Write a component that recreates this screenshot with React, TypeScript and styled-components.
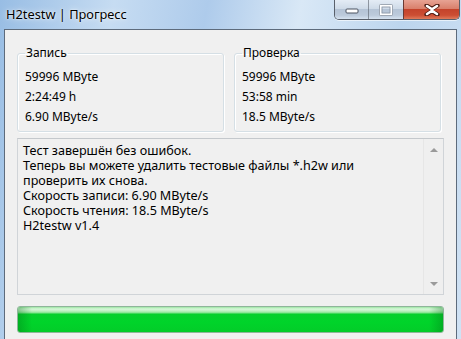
import React from "react";
import styled, { createGlobalStyle } from "styled-components";

const GlobalStyle = createGlobalStyle`
  html, body {
    margin: 0;
    padding: 0;
  }
  body {
    font-family: "Noto Sans", "Open Sans", sans-serif;
    font-size: 12px;
    color: #000;
  }
`;

const Frame = styled.div`
  width: 461px;
  height: 339px;
  overflow: hidden;
  display: flex;
  flex-flow: column nowrap;
  background: linear-gradient(
    100deg,
    #98bde4 0%,
    #c6dcf2 22%,
    #aecbeb 40%,
    #d9e8f6 58%,
    #bcd5ee 78%,
    #d0e2f4 100%
  );
  padding: 0 4px 0 4px;
  box-sizing: border-box;
`;

const TitleBar = styled.header`
  height: 29px;
  display: flex;
  flex-flow: row nowrap;
  align-items: flex-start;
  flex-shrink: 0;
`;

const Title = styled.h1`
  flex-grow: 1;
  margin: 0;
  padding: 6px 0 0 2px;
  font-size: 12.8px;
  font-weight: normal;
  line-height: 16px;
  color: #000;
  text-shadow: 0 0 6px rgba(255, 255, 255, 0.9), 0 0 2px #fff;
`;

const Caption = styled.div`
  display: flex;
  flex-flow: row nowrap;
  height: 19px;
  margin-right: -3px;
  border: 1px solid #59606b;
  border-top: none;
  border-radius: 0 0 5px 5px;
  overflow: hidden;
  box-shadow: 0 1px 0 rgba(255, 255, 255, 0.6);
`;

const CapButton = styled.div<{ $close?: boolean; $w: number }>`
  width: ${(p) => p.$w}px;
  display: flex;
  align-items: center;
  justify-content: center;
  border-left: ${(p) => (p.$close ? "1px solid #6b3a33" : "none")};
  border-right: ${(p) => (p.$close ? "none" : "1px solid rgba(90,96,107,0.6)")};
  background: ${(p) =>
    p.$close
      ? "linear-gradient(to bottom, #e7a394 0%, #d9806c 45%, #c4432b 50%, #cc4e33 80%, #e07a5a 100%)"
      : "linear-gradient(to bottom, #e4ecf5 0%, #cfdbe8 45%, #b5c4d6 50%, #bccadb 80%, #d6e3f0 100%)"};
  &:nth-child(2) {
    border-right: none;
  }
`;

const Client = styled.main`
  flex-grow: 1;
  background: #f0f0f0;
  border: 1px solid #5d6b7c;
  border-bottom: none;
  padding: 15px 12px 8px 12px;
  display: flex;
  flex-flow: column nowrap;
`;

const Groups = styled.div`
  display: grid;
  grid-template-columns: 207px 207px;
  column-gap: 10px;
`;

const Group = styled.fieldset`
  margin: 0;
  padding: 6px 7px 4px 7px;
  border: 1px solid #d5dfe5;
  border-radius: 3px;
  box-shadow: inset 1px 1px 0 #fff, 1px 1px 0 #fff;
  min-width: 0;
`;

const Legend = styled.legend`
  padding: 0 1px;
  line-height: 16px;
  font-size: 12px;
`;

const Value = styled.div`
  line-height: 20px;
`;

const Log = styled.section`
  margin-top: 6px;
  height: 155px;
  display: flex;
  flex-flow: row nowrap;
  border: 1px solid #d0d4d8;
  border-top-color: #c4c8cc;
  background: #f0f0f0;
`;

const LogText = styled.div`
  flex-grow: 1;
  padding: 4px 5px;
  font-size: 12.6px;
  line-height: 15px;
  white-space: pre-wrap;
`;

const ScrollBar = styled.div`
  width: 19px;
  display: flex;
  flex-flow: column nowrap;
  justify-content: space-between;
  align-items: center;
  padding: 9px 0 8px 0;
  border-left: 1px solid #e6e6e6;
  background: #efefef;
`;

const Arrow = styled.div<{ $down?: boolean }>`
  width: 0;
  height: 0;
  border-left: 4px solid transparent;
  border-right: 4px solid transparent;
  ${(p) =>
    p.$down
      ? "border-top: 4px solid #9a9a9a;"
      : "border-bottom: 4px solid #9a9a9a;"}
`;

const Progress = styled.div`
  margin-top: 11px;
  height: 27px;
  box-sizing: border-box;
  border: 1px solid #8fb59a;
  border-radius: 3px;
  overflow: hidden;
  background: #e6e6e6;
`;

const Fill = styled.div`
  height: 100%;
  background: linear-gradient(
      to right,
      rgba(0, 110, 20, 0.35) 0px,
      rgba(0, 110, 20, 0) 14px,
      rgba(0, 110, 20, 0) calc(100% - 14px),
      rgba(0, 110, 20, 0.35) 100%
    ),
    linear-gradient(
      to bottom,
      #9be6a3 0px,
      #d6f7d8 2px,
      #bff0c2 4px,
      #7ee38a 6px,
      #06cf2c 7px,
      #00d42a 60%,
      #03cc29 100%
    );
`;

const CloseGlyph = () => (
  <svg width="16" height="12" viewBox="0 0 16 12">
    <path
      d="M2.5 1.5 L8 5 L13.5 1.5 M2.5 10.5 L8 7 L13.5 10.5"
      fill="none"
      stroke="#4a1a12"
      strokeWidth="4.2"
      strokeLinecap="round"
    />
    <path
      d="M3 2 L8 5.3 L13 2 M3 10 L8 6.7 L13 10 M8 5.3 L8 6.7"
      fill="none"
      stroke="#fff"
      strokeWidth="2.6"
      strokeLinecap="round"
    />
  </svg>
);

const MinGlyph = () => (
  <svg width="14" height="8" viewBox="0 0 14 8">
    <rect x="1" y="3" width="12" height="4" rx="1" fill="#fff" stroke="#4b5360" strokeWidth="1" />
  </svg>
);

const MaxGlyph = () => (
  <svg width="14" height="12" viewBox="0 0 14 12">
    <rect x="1.5" y="1.5" width="11" height="9" rx="1" fill="none" stroke="#fff" strokeWidth="2.4" />
    <rect x="0.5" y="0.5" width="13" height="11" rx="1" fill="none" stroke="#8a94a2" strokeWidth="0.8" />
    <rect x="3" y="3" width="8" height="6" fill="none" stroke="#8a94a2" strokeWidth="0.8" />
  </svg>
);

const log = [
  "Тест завершён без ошибок.",
  "Теперь вы можете удалить тестовые файлы *.h2w или",
  "проверить их снова.",
  "Скорость записи: 6.90 MByte/s",
  "Скорость чтения: 18.5 MByte/s",
  "H2testw v1.4",
];

const write = ["59996 MByte", "2:24:49 h", "6.90 MByte/s"];
const verify = ["59996 MByte", "53:58 min", "18.5 MByte/s"];

const App: React.FC = () => (
  <>
    <GlobalStyle />
    <Frame>
      <TitleBar>
        <Title>H2testw | Прогресс</Title>
        <Caption>
          <CapButton $w={33}>
            <MinGlyph />
          </CapButton>
          <CapButton $w={34}>
            <MaxGlyph />
          </CapButton>
          <CapButton $w={55} $close>
            <CloseGlyph />
          </CapButton>
        </Caption>
      </TitleBar>
      <Client>
        <Groups>
          <Group>
            <Legend>Запись</Legend>
            {write.map((v) => (
              <Value key={v}>{v}</Value>
            ))}
          </Group>
          <Group>
            <Legend>Проверка</Legend>
            {verify.map((v) => (
              <Value key={v}>{v}</Value>
            ))}
          </Group>
        </Groups>
        <Log>
          <LogText>{log.join("\n")}</LogText>
          <ScrollBar>
            <Arrow />
            <Arrow $down />
          </ScrollBar>
        </Log>
        <Progress>
          <Fill style={{ width: "100%" }} />
        </Progress>
      </Client>
    </Frame>
  </>
);

export default App;
